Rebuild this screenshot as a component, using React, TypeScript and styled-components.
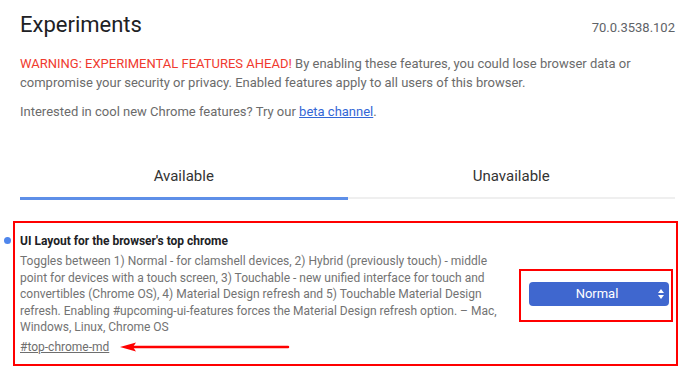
import React, { useState } from 'react';
import styled, { createGlobalStyle } from 'styled-components';

const GlobalStyle = createGlobalStyle`
    html, body {
        margin: 0;
        padding: 0;
        background: #ffffff;
        font-family: Roboto, "Noto Sans", sans-serif;
    }
`
const Page = styled.div`
    width: 690px;
    height: 376px;
    overflow: hidden;
    padding: 0 15px 0 20px;
    box-sizing: border-box;
`
const Header = styled.div`
    display: flex;
    justify-content: space-between;
    align-items: baseline;
    padding-top: 11px;
`
const Title = styled.h1`
    margin: 0;
    font-size: 22px;
    font-weight: 400;
    line-height: 28px;
    color: #202124;
`
const Version = styled.span`
    font-size: 13px;
    color: #5f6368;
`
const Para = styled.p<{ $gap: number }>`
    margin: ${p => p.$gap}px 0 0;
    font-size: 13px;
    line-height: 19px;
    color: #6b6b6b;
`
const Warning = styled.span`
    color: #f03a2e;
`
const Link = styled.a`
    color: #3367d6;
    text-decoration: underline;
`
const Tabs = styled.div`
    display: flex;
    margin-top: 46px;
`
const Tab = styled.div<{ $active?: boolean }>`
    flex: 1;
    text-align: center;
    font-size: 15px;
    color: #333;
    padding-bottom: 12px;
    border-bottom: ${p => p.$active ? '3px solid #5e8fe8' : '2px solid #efefef'};
    margin-bottom: ${p => p.$active ? '0' : '1px'};
    line-height: 18px;
    cursor: pointer;
`
const Experiment = styled.div`
    position: relative;
    margin: 21px -3px 0 -7px;
    border: 2px solid #ff0000;
    padding: 10px 2px 9px 5px;
    display: flex;
    align-items: center;
`
const Dot = styled.span`
    position: absolute;
    left: -11px;
    top: 14px;
    width: 7px;
    height: 7px;
    border-radius: 50%;
    background: #4f86ec;
`
const Info = styled.div`
    flex: 0 0 490px;
`
const Name = styled.div`
    font-size: 12px;
    font-weight: 700;
    color: #202124;
    line-height: 16px;
`
const Desc = styled.div`
    margin-top: 4px;
    font-size: 12px;
    line-height: 16.6px;
    color: #737373;
`
const LinkRow = styled.div`
    display: flex;
    align-items: center;
    margin-top: 3px;
`
const Permalink = styled.a`
    font-size: 12px;
    line-height: 16px;
    color: #6e6e6e;
    text-decoration: underline;
`
const Arrow = styled.svg`
    margin-left: 11px;
    display: block;
`
const SelectBox = styled.div`
    margin: 4px 0 0 9px;
    border: 2px solid #ff0000;
    padding: 11px 2px 14px 8px;
`
const Select = styled.div`
    position: relative;
    width: 140px;
    height: 24px;
    box-sizing: border-box;
    padding-right: 4px;
    border-radius: 4px;
    background: #3f67cf;
    color: #ffffff;
    font-size: 13px;
    line-height: 24px;
    text-align: center;
`
const Spinner = styled.svg`
    position: absolute;
    right: 5px;
    top: 6px;
`

const App = () => {
    const [tab, setTab] = useState(0)
    return (
        <Page>
            <GlobalStyle />
            <Header>
                <Title>Experiments</Title>
                <Version>70.0.3538.102</Version>
            </Header>
            <Para $gap={15}>
                <Warning>WARNING: EXPERIMENTAL FEATURES AHEAD!</Warning> By enabling these features, you could lose browser data or compromise your security or privacy. Enabled features apply to all users of this browser.
            </Para>
            <Para $gap={10}>
                Interested in cool new Chrome features? Try our <Link href="#">beta channel</Link>.
            </Para>
            <Tabs>
                <Tab $active={tab === 0} onClick={() => setTab(0)}>Available</Tab>
                <Tab $active={tab === 1} onClick={() => setTab(1)}>Unavailable</Tab>
            </Tabs>
            <Experiment>
                <Dot />
                <Info>
                    <Name>UI Layout for the browser's top chrome</Name>
                    <Desc>
                        Toggles between 1) Normal - for clamshell devices, 2) Hybrid (previously touch) - middle point for devices with a touch screen, 3) Touchable - new unified interface for touch and convertibles (Chrome OS), 4) Material Design refresh and 5) Touchable Material Design refresh. Enabling #upcoming-ui-features forces the Material Design refresh option. – Mac, Windows, Linux, Chrome OS
                    </Desc>
                    <LinkRow>
                        <Permalink href="#">#top-chrome-md</Permalink>
                        <Arrow width="170" height="10" viewBox="0 0 170 10">
                            <path d="M14 5 H168" stroke="#ff0000" strokeWidth="2.5" strokeLinecap="round" />
                            <path d="M0 5 L16 0.5 L13 5 L16 9.5 Z" fill="#ff0000" />
                        </Arrow>
                    </LinkRow>
                </Info>
                <SelectBox>
                    <Select>
                        Normal
                        <Spinner width="6" height="12" viewBox="0 0 6 12">
                            <path d="M3 1 L6 5 H0 Z" fill="#ffffff" />
                            <path d="M3 11 L6 7 H0 Z" fill="#ffffff" />
                        </Spinner>
                    </Select>
                </SelectBox>
            </Experiment>
        </Page>
    )
}

export default App;
